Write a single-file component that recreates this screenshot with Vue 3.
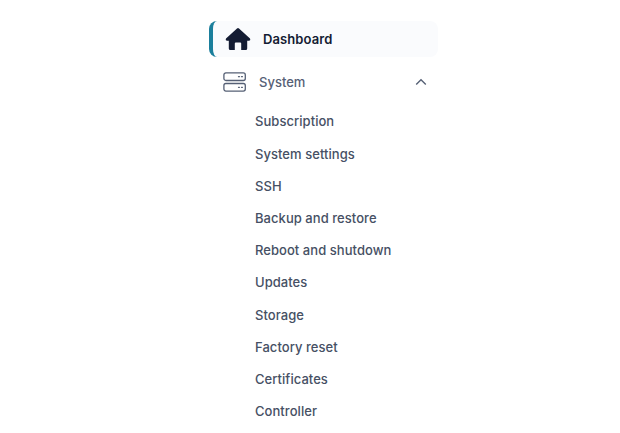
<script setup>
const items = ['Subscription','System settings','SSH','Backup and restore','Reboot and shutdown','Updates','Storage','Factory reset','Certificates','Controller']
</script>

<template>
  <nav class="side">
    <a class="row active">
      <svg class="home" width="26" height="24" viewBox="0 0 26 24"><path d="M12 1.4 Q13 .7 14 1.4 L25 11.6 Q26 13.6 24.2 13.8 H22.2 V21.5 Q22.2 23 20.7 23 H16.2 V16.4 Q16.2 15.4 15.2 15.4 H10.8 Q9.8 15.4 9.8 16.4 V23 H5.3 Q3.8 23 3.8 21.5 V13.8 H1.8 Q0 13.6 1 11.6 Z" fill="#141c33"/></svg>
      <span>Dashboard</span>
    </a>
    <a class="row system">
      <svg width="24" height="20" viewBox="0 0 24 20" fill="none" stroke="#566075" stroke-width="1.3"><rect x=".9" y=".9" width="21.4" height="7.6" rx="2"/><rect x=".9" y="11.5" width="21.4" height="7.6" rx="2"/><path d="M15.5 4.7h.9M18.5 4.7h.9M15.5 15.3h.9M18.5 15.3h.9" stroke-linecap="round"/></svg>
      <span>System</span>
      <svg class="chev" width="12" height="8" viewBox="0 0 12 8" fill="none" stroke="#566075" stroke-width="1.4"><path d="M1.2 6.4 6 1.8l4.8 4.6"/></svg>
    </a>
    <ul class="sub">
      <li v-for="i in items" :key="i">{{ i }}</li>
    </ul>
  </nav>
</template>

<style scoped>
.side { width: 229px; margin-left: 209px; padding-top: 21px; font-family: Inter, "Open Sans", sans-serif; font-size: 13px; font-weight: 500; color: #465064; }
.row { display: flex; align-items: center; box-sizing: border-box; }
.active { height: 36px; background: #fafbfd; border-left: 4px solid #1b7f9c; border-radius: 8px; padding-left: 12px; gap: 12px; color: #141c33; font-weight: 600; letter-spacing: 0.1px; }
.system { height: 36px; margin-top: 7px; padding-left: 14px; gap: 12px; color: #566075; }
.chev { margin-left: auto; margin-right: 11px; }
.sub { list-style: none; margin: 0; padding: 5.4px 0 0 46px; letter-spacing: 0.05px; }
.sub li { height: 32.2px; line-height: 32.2px; }
</style>
